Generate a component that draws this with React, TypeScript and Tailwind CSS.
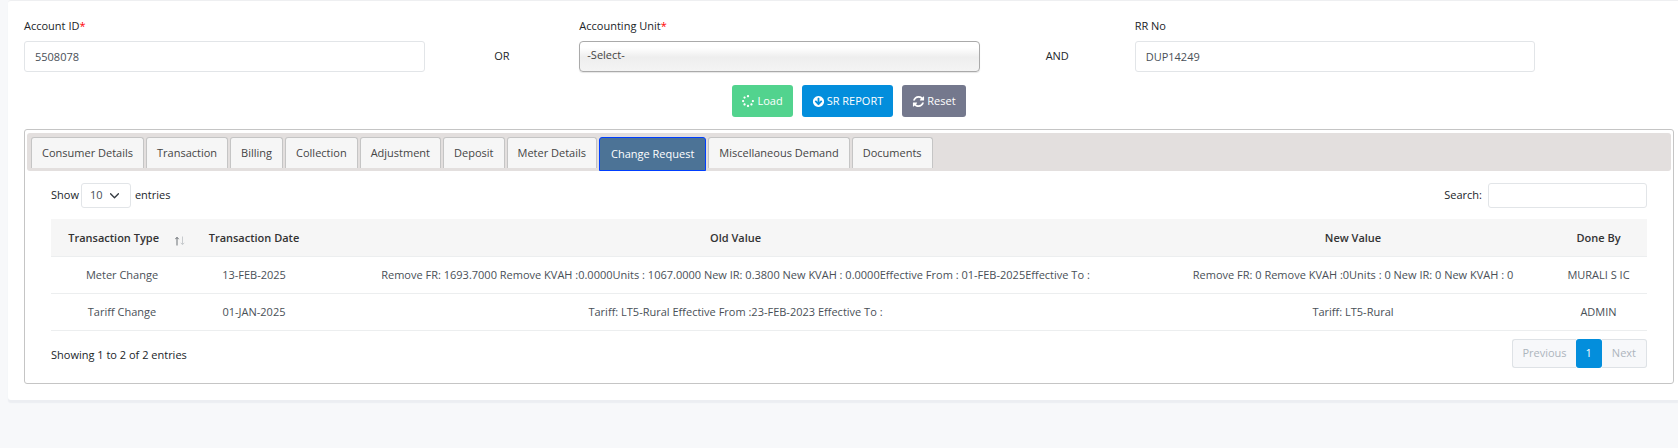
import { FaSpinner } from "react-icons/fa";

const inputClass =
  "h-[31px] w-full rounded-[3px] border border-[#e2e5e8] bg-white px-[10px] text-[11px] text-[#495057] outline-none";

const tabs = [
  "Consumer Details",
  "Transaction",
  "Billing",
  "Collection",
  "Adjustment",
  "Deposit",
  "Meter Details",
  "Change Request",
  "Miscellaneous Demand",
  "Documents",
];

const rows = [
  {
    type: "Meter Change",
    date: "13-FEB-2025",
    oldValue:
      "Remove FR: 1693.7000 Remove KVAH :0.0000Units : 1067.0000 New IR: 0.3800 New KVAH : 0.0000Effective From : 01-FEB-2025Effective To :",
    newValue: "Remove FR: 0 Remove KVAH :0Units : 0 New IR: 0 New KVAH : 0",
    by: "MURALI S IC",
  },
  {
    type: "Tariff Change",
    date: "01-JAN-2025",
    oldValue: "Tariff: LT5-Rural Effective From :23-FEB-2023 Effective To :",
    newValue: "Tariff: LT5-Rural",
    by: "ADMIN",
  },
];

function ArrowCircleDown() {
  return (
    <svg viewBox="0 0 1792 1792" className="size-[13px]" fill="currentColor" aria-hidden="true">
      <path d="M1412 897q0-27-18-45l-91-91q-18-18-45-18t-45 18l-189 189v-502q0-26-19-45t-45-19h-128q-26 0-45 19t-19 45v502l-189-189q-19-19-45-19t-45 19l-91 91q-18 18-18 45t18 45l362 362 91 91q18 18 45 18t45-18l91-91 362-362q18-18 18-45zm252-1q0 209-103 385.5t-279.5 279.5-385.5 103-385.5-103-279.5-279.5-103-385.5 103-385.5 279.5-279.5 385.5-103 385.5 103 279.5 279.5 103 385.5z" />
    </svg>
  );
}

function Refresh() {
  return (
    <svg viewBox="0 0 1792 1792" className="size-[13px]" fill="currentColor" aria-hidden="true">
      <path d="M1639 1056q0 5-1 7-64 268-268 434.5t-478 166.5q-146 0-282.5-55t-243.5-157l-129 129q-19 19-45 19t-45-19-19-45v-448q0-26 19-45t45-19h448q26 0 45 19t19 45-19 45l-137 137q71 66 161 102t187 36q134 0 250-65t186-179q11-17 53-117 8-23 30-23h192q13 0 22.5 9.5t9.5 22.5zm25-800v448q0 26-19 45t-45 19h-448q-26 0-45-19t-19-45 19-45l138-138q-148-137-349-137-134 0-250 65t-186 179q-11 17-53 117-8 23-30 23h-199q-13 0-22.5-9.5t-9.5-22.5v-7q65-268 270-434.5t480-166.5q146 0 284 55.5t245 156.5l130-129q19-19 45-19t45 19 19 45z" />
    </svg>
  );
}

function SearchForm() {
  return (
    <form className="grid grid-cols-12 gap-x-4 text-[11px]" onSubmit={(e) => e.preventDefault()}>
      <div className="col-span-3">
        <label htmlFor="account" className="mb-[7px] block leading-4">
          Account ID<span className="text-[#ff0000]">*</span>
        </label>
        <input id="account" className={inputClass} defaultValue="5508078" />
      </div>
      <div className="flex h-[31px] items-center justify-center self-end">OR</div>
      <div className="col-span-3">
        <label htmlFor="unit" className="mb-[7px] block leading-4">
          Accounting Unit<span className="text-[#ff0000]">*</span>
        </label>
        <select
          id="unit"
          className="block h-[31px] w-full appearance-none rounded-[4px] border border-[#aaaaaa] bg-linear-to-b from-white from-20% via-[#eeeeee] via-52% to-[#f4f4f4] px-[7px] pb-[2px] text-[11px] text-[#444444] shadow-[0_1px_1px_rgba(0,0,0,0.1)] outline-none"
        >
          <option>-Select-</option>
        </select>
      </div>
      <div className="flex h-[31px] items-center justify-center self-end">AND</div>
      <div className="col-span-3">
        <label htmlFor="rr" className="mb-[7px] block leading-4">
          RR No
        </label>
        <input id="rr" className={inputClass} defaultValue="DUP14249" />
      </div>
      <div className="col-span-12 mt-[13px] flex justify-center gap-[9px] text-[11px] text-white">
        <button type="button" className="flex h-8 items-center gap-[3px] rounded-[3px] bg-[#52d38e] px-[10px]">
          <FaSpinner className="size-3" aria-hidden="true" />
          Load
        </button>
        <button type="button" className="flex h-8 items-center gap-[2px] rounded-[3px] bg-[#038edc] px-[10px]">
          <ArrowCircleDown />
          SR REPORT
        </button>
        <button type="button" className="flex h-8 items-center gap-[2px] rounded-[3px] bg-[#74788d] px-[10px]">
          <Refresh />
          Reset
        </button>
      </div>
    </form>
  );
}

function TabBar() {
  return (
    <div role="tablist" className="flex h-[38px] items-start gap-[2px] rounded-[3px] bg-[#e3dfde] pt-1 pl-1 text-[11px]">
      {tabs.map((tab) => {
        const active = tab === "Change Request";
        return (
          <button
            key={tab}
            type="button"
            role="tab"
            aria-selected={active}
            className={
              active
                ? "h-[34px] rounded-t-[3px] border border-[#003eff] bg-[#4c7396] px-[11px] text-white"
                : "h-[31px] rounded-t-[3px] border border-b-0 border-[#c5c5c5] bg-[#f6f6f6] px-[10px] text-[#454545]"
            }
          >
            {tab}
          </button>
        );
      })}
    </div>
  );
}

function Results() {
  return (
    <div className="px-6 pt-3 pb-[15px]">
      <div className="flex items-center justify-between text-[11px]">
        <label className="flex items-center gap-[2px]">
          Show
          <span className="relative flex">
            <select className="h-[25px] w-[50px] appearance-none rounded-[3px] border border-[#e2e5e8] bg-white pl-2 text-[11px] text-[#495057] outline-none">
              <option>10</option>
            </select>
            <svg viewBox="0 0 16 16" className="pointer-events-none absolute top-2 right-3 size-[9px]" fill="none" stroke="#343a40" strokeWidth="2.4" strokeLinecap="round" strokeLinejoin="round" aria-hidden="true">
              <path d="M1 5l7 7 7-7" />
            </svg>
          </span>
          <span className="pl-[2px]">entries</span>
        </label>
        <label className="flex items-center gap-[6px]">
          Search:
          <input type="search" className="h-[25px] w-[159px] rounded-[3px] border border-[#e2e5e8] bg-white px-2 outline-none" />
        </label>
      </div>
      <table className="mt-[11px] w-full table-fixed border-collapse text-center text-[11px] text-[#495057]">
        <colgroup>
          <col className="w-[142px]" />
          <col className="w-[122px]" />
          <col />
          <col className="w-[394px]" />
          <col className="w-[97px]" />
        </colgroup>
        <thead className="bg-[#f6f6f6] text-[#333333]">
          <tr className="h-[37px] border-b border-[#eceeef] *:pt-[2px]">
            <th className="font-semibold" aria-sort="ascending">
              <div className="flex items-center justify-end gap-4 pr-[8px]">
                Transaction Type
                <svg viewBox="0 0 10 10" className="mt-[5px] size-[10px]" fill="none" aria-hidden="true">
                  <path d="M2 9.500V1.500M0.300 3.200L2 1.300L3.700 3.200" stroke="#6b7075" />
                  <path d="M7.500 0.500V8.500M5.800 6.800L7.500 8.700L9.200 6.800" stroke="#c8cbce" />
                </svg>
              </div>
            </th>
            <th className="font-semibold">Transaction Date</th>
            <th className="font-semibold">Old Value</th>
            <th className="font-semibold">New Value</th>
            <th className="font-semibold">Done By</th>
          </tr>
        </thead>
        <tbody>
          {rows.map((row) => (
            <tr key={row.type} className="h-[37px] border-b border-[#eceeef] *:pt-[2px]">
              <td>{row.type}</td>
              <td>{row.date}</td>
              <td>{row.oldValue}</td>
              <td>{row.newValue}</td>
              <td>{row.by}</td>
            </tr>
          ))}
        </tbody>
      </table>
      <div className="mt-2 flex items-center justify-between text-[11px]">
        <p className="pt-1">Showing 1 to 2 of 2 entries</p>
        <nav aria-label="Pages" className="flex h-[29px] text-[#adb5bd]">
          <button type="button" disabled className="rounded-l-[3px] border border-r-0 border-[#dee2e6] bg-[#f7f8fa] px-[9px]">
            Previous
          </button>
          <button type="button" aria-current="page" className="rounded-[3px] bg-[#038edc] px-[10px] text-white">
            1
          </button>
          <button type="button" disabled className="rounded-r-[3px] border border-l-0 border-[#dee2e6] bg-[#f7f8fa] px-[10px]">
            Next
          </button>
        </nav>
      </div>
    </div>
  );
}

export default function App() {
  return (
    <div className="min-h-screen bg-[#f7f8fa] pl-2 font-['Open_Sans',sans-serif] text-[#212529]">
      <main className="rounded-l-[3px] border-t border-[#eeeff1] bg-white pt-[17px] pr-1 pb-4 pl-4 shadow-[0_3px_1px_#eceef2]">
        <SearchForm />
        <section className="mt-3 rounded-[3px] border border-[#c5c5c5] px-[2px] pt-[3px]">
          <TabBar />
          <Results />
        </section>
      </main>
    </div>
  );
}
